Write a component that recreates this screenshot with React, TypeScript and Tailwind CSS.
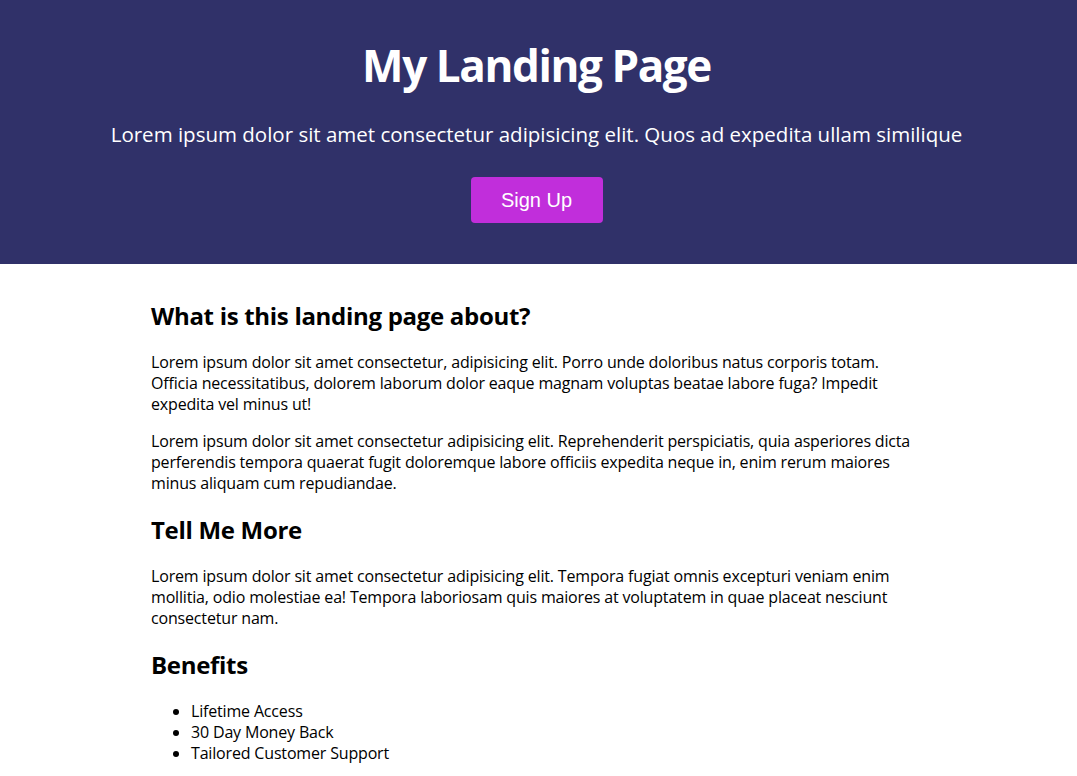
import React from 'react';

const benefits = ['Lifetime Access', '30 Day Money Back', 'Tailored Customer Support'];

const App: React.FC = () => {
  return (
    <div className="min-h-screen bg-white text-black font-['Open_Sans','Noto_Sans_CJK_KR',sans-serif]">
      {/* Hero */}
      <header className="bg-[#303169] text-white text-center pt-[33px] pb-[41px] pr-[4px]">
        <h1 className="text-[44px] leading-[64px] font-bold tracking-[-1.4px]">My Landing Page</h1>
        <p className="mt-[24px] text-[20.5px] leading-[27px]">
          Lorem ipsum dolor sit amet consectetur adipisicing elit. Quos ad expedita ullam similique
        </p>
        <button className="mt-[29px] w-[132px] h-[46px] rounded bg-[#c12edb] text-white text-[20px] font-['Liberation_Sans',Arial,sans-serif]">
          Sign Up
        </button>
      </header>

      {/* Content */}
      <main className="max-w-[800px] mx-auto px-[12.5px] pt-[16px] pb-8 text-[16px] leading-[21px] tracking-[-0.17px]">
        <h2 className="text-[24px] leading-[32px] font-bold mt-5 mb-5 tracking-[-0.3px]">What is this landing page about?</h2>
        <p className="mb-4">
          Lorem ipsum dolor sit amet consectetur, adipisicing elit. Porro unde doloribus natus corporis totam. Officia necessitatibus, dolorem laborum dolor eaque magnam voluptas beatae labore fuga? Impedit expedita vel minus ut!
        </p>
        <p>
          Lorem ipsum dolor sit amet consectetur adipisicing elit. Reprehenderit perspiciatis, quia asperiores dicta perferendis tempora quaerat fugit doloremque labore officiis expedita neque in, enim rerum maiores minus aliquam cum repudiandae.
        </p>

        <h2 className="text-[24px] leading-[32px] font-bold mt-5 mb-5 tracking-[-0.3px]">Tell Me More</h2>
        <p>
          Lorem ipsum dolor sit amet consectetur adipisicing elit. Tempora fugiat omnis excepturi veniam enim mollitia, odio molestiae ea! Tempora laboriosam quis maiores at voluptatem in quae placeat nesciunt consectetur nam.
        </p>

        <h2 className="text-[24px] leading-[32px] font-bold mt-5 mb-5 tracking-[-0.3px]">Benefits</h2>
        <ul className="list-disc pl-10">
          {benefits.map((b) => (
            <li key={b}>{b}</li>
          ))}
        </ul>
      </main>
    </div>
  );
};

export default App;
